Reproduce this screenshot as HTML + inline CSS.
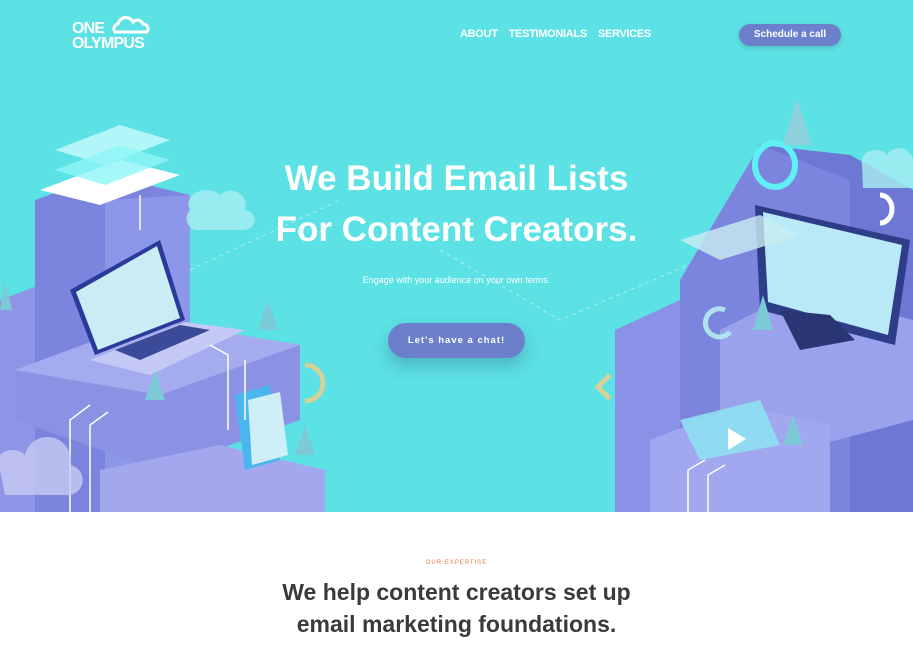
<!DOCTYPE html>
<html><head><meta charset="utf-8"><style>
*{margin:0;padding:0;box-sizing:border-box}
body{width:913px;height:657px;overflow:hidden;background:#fff;font-family:"Liberation Sans",sans-serif}
.hero{position:absolute;left:0;top:0;width:913px;height:512px;background:#5ce1e4;overflow:hidden}
.logo{position:absolute;left:72px;top:21px;color:#fff;font-weight:bold;font-size:16px;line-height:15px;letter-spacing:-0.8px}
.nav{position:absolute;top:28px;left:460px;color:#fff;font-weight:bold;font-size:11px;letter-spacing:-0.3px}
.nav span{margin-right:11px}
.btn1{position:absolute;left:739px;top:24px;width:102px;height:22px;border-radius:11px;background:#6b7fcb;color:#fff;font-size:10px;font-weight:bold;text-align:center;line-height:22px;box-shadow:0 2px 6px rgba(0,0,0,.15)}
h1{position:absolute;left:0;width:913px;text-align:center;color:#fff;font-size:35px;font-weight:bold;line-height:51px;top:153px}
.sub{position:absolute;top:275px;width:913px;text-align:center;color:#fff;font-size:9px}
.btn2{position:absolute;left:388px;top:323px;width:137px;height:35px;border-radius:18px;background:#6b7fcb;color:#fff;font-size:9.5px;font-weight:bold;letter-spacing:1px;text-align:center;line-height:35px;box-shadow:0 8px 16px rgba(40,80,120,.3)}
.ex{position:absolute;top:560px;width:913px;text-align:center;color:#f0764a;font-size:6px;letter-spacing:1px}
h2{position:absolute;top:576px;width:913px;text-align:center;color:#3a3a3a;font-size:23px;font-weight:bold;line-height:32px}
</style></head><body>
<div class="hero">
<svg width="913" height="512" style="position:absolute;left:0;top:0">
<g stroke="#fff" stroke-opacity=".5" stroke-dasharray="4 4" fill="none"><path d="M190 270 L340 200"/><path d="M440 250 L560 320 L700 260"/></g>
<polygon points="0,300 40,285 40,512 0,512" fill="#8f95e6"/>
<polygon points="35,200 105,175 190,195 190,512 35,512" fill="#7c85de"/>
<polygon points="105,200 190,195 190,512 105,512" fill="#8d97ea"/>
<polygon points="15,370 150,320 300,345 300,420 160,470 15,420" fill="#8b92e4"/>
<polygon points="15,370 150,320 300,345 160,395" fill="#a5abef"/>
<polygon points="100,470 220,445 325,470 325,512 100,512" fill="#a3a8ee"/>
<polygon points="40,190 120,160 180,175 100,205" fill="#fff"/>
<polygon points="55,150 120,125 170,140 105,165" fill="#c9fbfb" opacity=".8"/>
<polygon points="55,170 120,145 170,160 105,185" fill="#8ff6f6" opacity=".8"/>
<polygon points="70,290 160,240 185,320 95,355" fill="#2a3a9a"/>
<polygon points="76,292 157,246 180,318 98,350" fill="#c9ecf5"/>
<polygon points="90,360 185,322 245,330 150,375" fill="#c5c9f5"/>
<polygon points="115,350 180,325 210,330 140,360" fill="#3c4a9a"/>
<polygon points="235,395 270,385 280,460 245,470" fill="#4ab6ef"/>
<polygon points="248,400 280,392 288,455 252,465" fill="#cfeff8"/>
<g stroke="#fff" stroke-width="1.5" fill="none"><path d="M70 512V420L90 405"/><path d="M90 512V425L108 412"/><path d="M228 430V355L210 345"/><path d="M245 420V360"/><path d="M140 195V230"/></g>
<path d="M190 210a18 14 0 0 1 30-15a15 15 0 0 1 25 15a12 10 0 0 1-5 20h-45a12 12 0 0 1-5-20z" fill="#a8eef0" opacity=".8"/>
<path d="M0 470a15 12 0 0 1 25-15a14 14 0 0 1 45 10a10 10 0 0 1-5 30h-60z" fill="#c6caf2" opacity=".8"/>
<path d="M305 365a18 18 0 0 1 0 36" stroke="#d4d29a" stroke-width="5" fill="none"/>
<polygon points="155,370 145,400 165,400" fill="#7ccad8"/><polygon points="268,300 258,330 278,330" fill="#7ccad8"/><polygon points="305,425 295,455 315,455" fill="#7ccad8"/><polygon points="5,280 0,310 12,310" fill="#7ccad8"/>
<polygon points="615,330 680,300 680,512 615,512" fill="#8a91e6"/>
<polygon points="680,280 760,145 850,155 913,190 913,512 680,512" fill="#7c85de"/>
<polygon points="760,145 850,155 913,190 913,512 850,512 850,180" fill="#6d77d4"/>
<polygon points="720,330 800,290 913,320 913,420 800,450 720,410" fill="#9aa2ec"/>
<polygon points="650,440 740,405 830,425 830,512 650,512" fill="#a2a8ef"/>
<polygon points="755,205 910,240 895,345 760,310" fill="#2e3d88"/>
<polygon points="763,212 902,245 888,335 768,302" fill="#b9e8f6"/>
<polygon points="780,310 830,315 855,340 800,350" fill="#2a3674"/>
<polygon points="680,240 760,215 800,235 720,260" fill="#c9eef3" opacity=".8"/>
<polygon points="680,420 760,400 780,445 700,460" fill="#8fe0f2" opacity=".9"/>
<polygon points="728,428 728,450 746,439" fill="#fff"/>
<ellipse cx="775" cy="165" rx="20" ry="22" stroke="#5ff0f5" stroke-width="6" fill="none"/>
<path d="M880 195a12 14 0 0 1 0 28" stroke="#fff" stroke-width="5" fill="none"/>
<path d="M862 165a14 12 0 0 1 25-10a14 14 0 0 1 26 5v28h-50z" fill="#a8eef0" opacity=".8"/>
<path d="M610 375l-12 12l12 12" stroke="#d4d29a" stroke-width="5" fill="none"/>
<path d="M725 310a14 14 0 1 0 5 22" stroke="#b0e2ee" stroke-width="5" fill="none"/>
<polygon points="797,98 783,145 812,145" fill="#8dd1dc"/><polygon points="763,295 753,330 773,330" fill="#7ccad8"/><polygon points="793,415 783,445 803,445" fill="#7ccad8"/>
<g stroke="#fff" stroke-width="1.5" fill="none"><path d="M688 512V470L705 460"/><path d="M708 512V475L725 465"/></g>
</svg>
<div class="logo">ONE<br>OLYMPUS</div>
<svg width="42" height="18" style="position:absolute;left:111px;top:16px"><path d="M4 16a5 5 0 0 1 3-8a8 8 0 0 1 15-2a6 6 0 0 1 10 2a5 5 0 0 1 4 8z" fill="none" stroke="#fff" stroke-width="3"/></svg>
<div class="nav"><span>ABOUT</span><span>TESTIMONIALS</span><span>SERVICES</span></div>
<div class="btn1">Schedule a call</div>
<h1>We Build Email Lists<br>For Content Creators.</h1>
<div class="sub">Engage with your audience on your own terms.</div>
<div class="btn2">Let's have a chat!</div>
</div>
<div class="ex">OUR EXPERTISE</div>
<h2>We help content creators set up<br>email marketing foundations.</h2>
</body></html>
